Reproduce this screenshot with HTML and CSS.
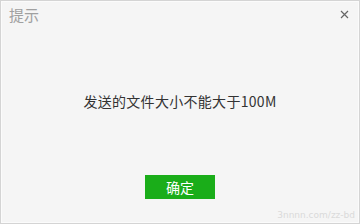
FILE: index.html
```html
<!DOCTYPE html>
<html lang="zh-CN">

<head>
  <meta charset="UTF-8">
  <title>提示</title>
  <link rel="stylesheet" href="styles.css">
</head>

<body>
  <div class="dialog">
    <!-- Title bar -->
    <div class="title-bar">
      <span class="title">提示</span>
      <span class="close-btn">
        <svg width="9" height="9" viewBox="0 0 9 9">
          <path d="M1 1L8 8M8 1L1 8" stroke="#666" stroke-width="1.2" fill="none" />
        </svg>
      </span>
    </div>

    <p class="message">发送的文件大小不能大于100M</p>

    <div class="actions">
      <button class="ok-btn">确定</button>
    </div>

    <span class="watermark">3nnnn.com/zz-bd</span>
  </div>
</body>

</html>
```

FILE: styles.css
```css
* {
  margin: 0;
  padding: 0;
  box-sizing: border-box;
}

body {
  width: 360px;
  height: 224px;
  font-family: "Noto Sans CJK SC", "Noto Sans", sans-serif;
  background: #e9e9e9;
}

/* Dialog window */
.dialog {
  position: relative;
  width: 360px;
  height: 224px;
  background: #f5f5f5;
  border: 1px solid #d4d4d4;
  box-shadow: inset 0 0 0 1px #fbfbfb;
  display: flex;
  flex-direction: column;
}

.title-bar {
  height: 27px;
  display: flex;
  align-items: center;
  justify-content: space-between;
  padding: 0 10px 0 8px;
}

.title {
  font-size: 15px;
  color: #a0a0a0;
  line-height: 20px;
}

.close-btn {
  display: flex;
  margin-top: -1px;
}

.message {
  margin-top: 63px;
  text-align: center;
  font-size: 14px;
  letter-spacing: 0.3px;
  line-height: 20px;
  color: #333;
}

.actions {
  margin-top: 64px;
  display: flex;
  justify-content: center;
}

.ok-btn {
  width: 70px;
  height: 24px;
  border: none;
  background: #1aad19;
  color: #fff;
  font-family: inherit;
  font-size: 14px;
  line-height: 24px;
}

/* faint watermark bottom right */
.watermark {
  position: absolute;
  right: 4px;
  bottom: 3px;
  font-size: 9px;
  color: #dadada;
  font-family: "DejaVu Sans", sans-serif;
}
```
